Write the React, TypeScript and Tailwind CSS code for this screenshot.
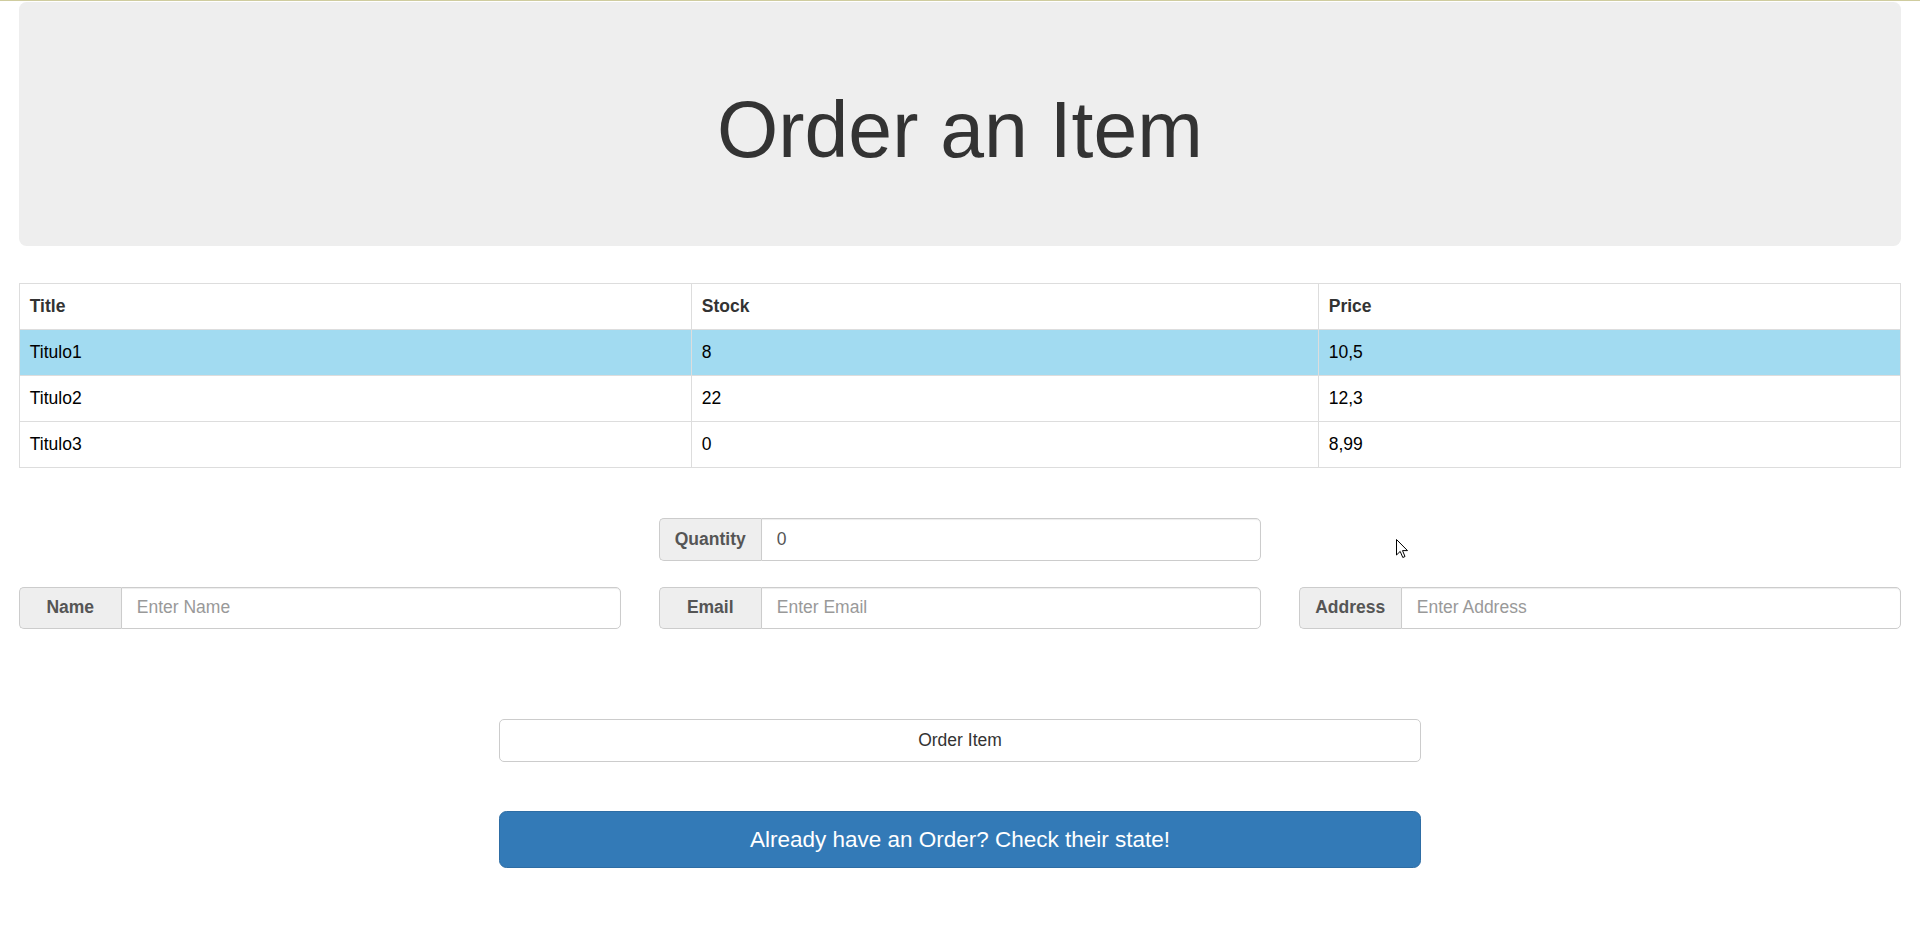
import React from "react";

const items = [
  { title: "Titulo1", stock: "8", price: "10,5", active: true },
  { title: "Titulo2", stock: "22", price: "12,3", active: false },
  { title: "Titulo3", stock: "0", price: "8,99", active: false },
];

function Field({ label, placeholder, value }: { label: string; placeholder?: string; value?: string }) {
  return (
    <div className="flex h-[42.5px] w-full">
      <span className="flex w-[102px] shrink-0 items-center justify-center rounded-l-[5px] border border-r-0 border-[#ccc] bg-[#eee] text-[17.5px] font-bold text-[#555]">
        {label}
      </span>
      <input
        className="w-full min-w-0 rounded-r-[5px] border border-[#ccc] bg-white px-[15px] text-[17.5px] text-[#555] shadow-[inset_0_1px_1px_rgba(0,0,0,0.075)] outline-none placeholder:text-[#999]"
        placeholder={placeholder}
        defaultValue={value}
      />
    </div>
  );
}

export default function App() {
  return (
    <div className="relative min-h-screen bg-white font-['Liberation_Sans',Arial,sans-serif] text-[17.5px] leading-[25px] text-[#333]">
      <div className="h-px bg-[#cfcc9f]" />
      <div className="px-[18.75px] pt-px">
        {/* jumbotron */}
        <div className="mb-[37px] rounded-[7.5px] bg-[#eee] px-[75px] py-[60px] text-center">
          <h1 className="mt-[25px] mb-[12.5px] text-[78.75px] leading-[1.1] font-normal text-[#333]">Order an Item</h1>
        </div>

        <table className="mb-[25px] w-full border-collapse border border-[#ddd]">
          <thead>
            <tr>
              <th className="w-[672px] border border-[#ddd] px-[10px] py-[10px] text-left font-bold">Title</th>
              <th className="w-[627px] border border-[#ddd] px-[10px] py-[10px] text-left font-bold">Stock</th>
              <th className="border border-[#ddd] px-[10px] py-[10px] text-left font-bold">Price</th>
            </tr>
          </thead>
          <tbody>
            {items.map((it) => (
              <tr key={it.title} className={it.active ? "bg-[#a2dbf1]" : ""}>
                <td className="border border-[#ddd] px-[10px] py-[10px] text-black">{it.title}</td>
                <td className="border border-[#ddd] px-[10px] py-[10px] text-black">{it.stock}</td>
                <td className="border border-[#ddd] px-[10px] py-[10px] text-black">{it.price}</td>
              </tr>
            ))}
          </tbody>
        </table>

        <div className="grid grid-cols-3 gap-x-[37.5px] pt-[25px]">
          <div />
          <Field label="Quantity" value="0" />
          <div />
        </div>

        <div className="mt-[26px] grid grid-cols-3 gap-x-[37.5px]">
          <Field label="Name" placeholder="Enter Name" />
          <Field label="Email" placeholder="Enter Email" />
          <Field label="Address" placeholder="Enter Address" />
        </div>

        <div className="mx-auto mt-[90px] flex w-[922px] flex-col">
          <button className="h-[42.5px] w-full rounded-[5px] border border-[#ccc] bg-white text-[17.5px] text-[#333]">
            Order Item
          </button>
          <button className="mt-[49px] h-[57.5px] w-full rounded-[7.5px] border border-[#2e6da4] bg-[#337ab7] text-[22.5px] text-white">
            Already have an Order? Check their state!
          </button>
        </div>
      </div>

      {/* mouse pointer */}
      <svg className="absolute left-[1396px] top-[539px]" width="13" height="20" viewBox="0 0 13 20">
        <path d="M0.5 0.5 L0.5 16 L4.2 12.4 L6.8 18.5 L9 17.5 L6.5 11.6 L11.5 11.6 Z" fill="white" stroke="black" strokeWidth="1" />
      </svg>
    </div>
  );
}
